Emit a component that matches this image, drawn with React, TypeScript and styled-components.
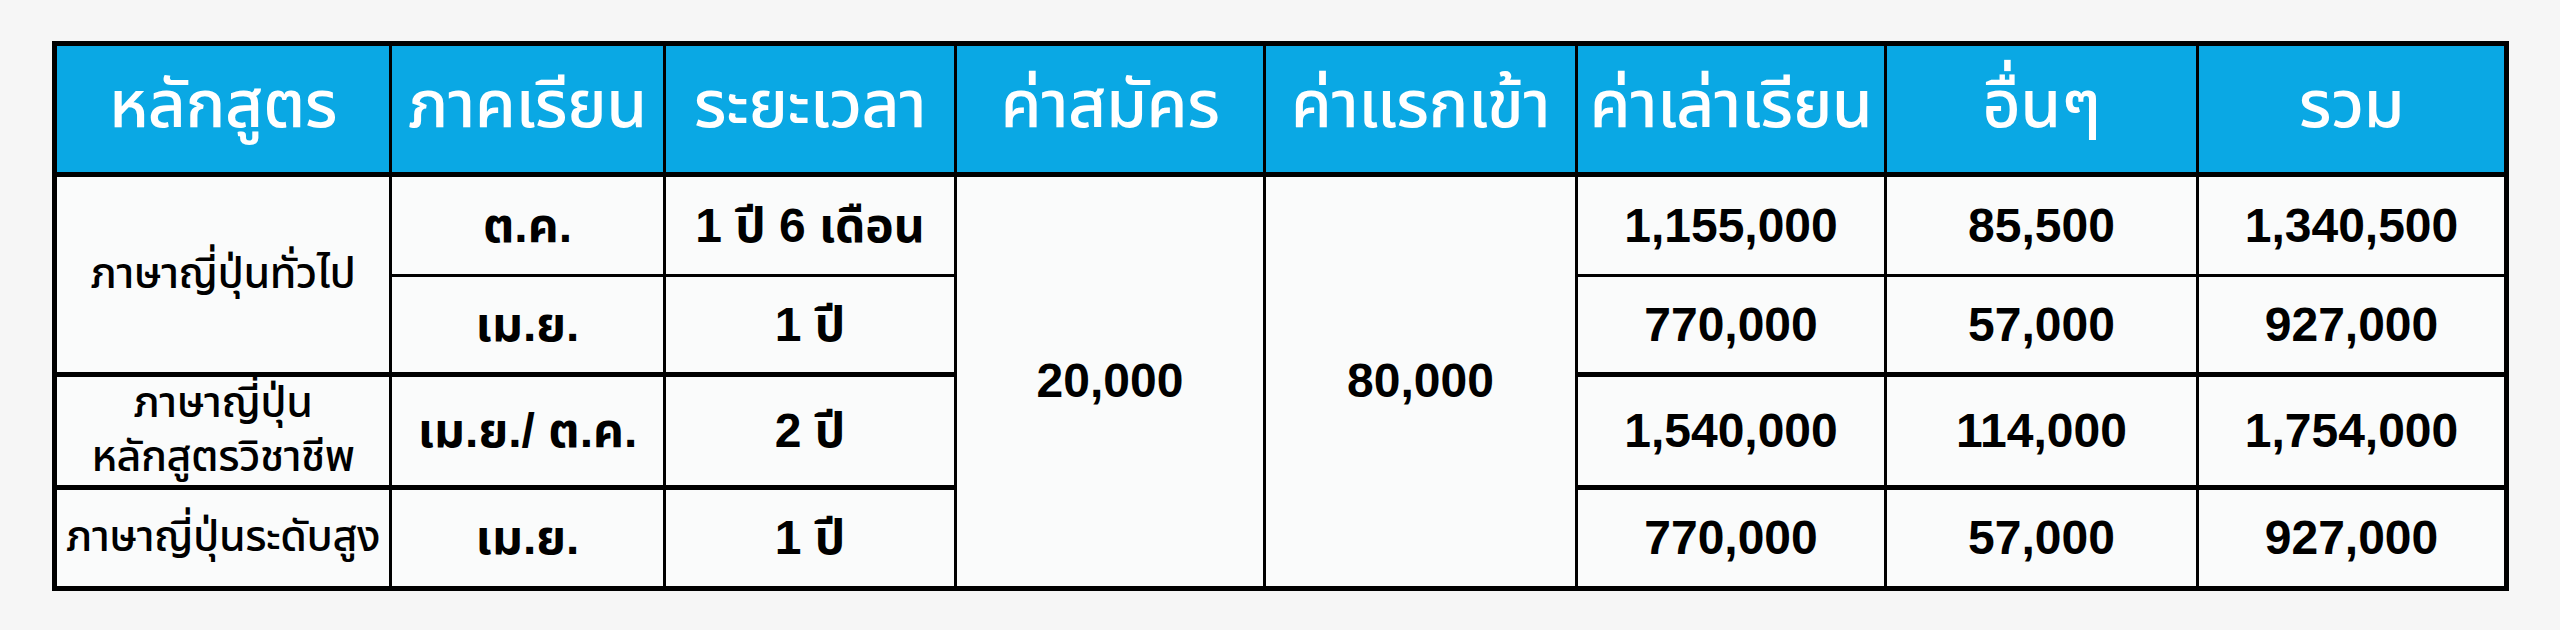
import * as React from "react";
import styled, { createGlobalStyle } from "styled-components";

const GlobalStyle = createGlobalStyle`
  html, body {
    margin: 0;
    padding: 0;
    background: #f6f6f6;
  }
  body {
    font-family: "Noto Sans Thai", "Noto Sans", "Liberation Sans", sans-serif;
  }
`;

// column widths, measured between border centres
const COLUMNS = [336, 274, 291, 309, 312, 309, 312, 309];

const HEADINGS = [
  "หลักสูตร",
  "ภาคเรียน",
  "ระยะเวลา",
  "ค่าสมัคร",
  "ค่าแรกเข้า",
  "ค่าเล่าเรียน",
  "อื่นๆ",
  "รวม",
];

const Page = styled.div`
  padding: 41px 0 0 52px;
  width: 2560px;
  height: 630px;
  box-sizing: border-box;
`;

const Table = styled.table`
  border-collapse: collapse;
  table-layout: fixed;
  width: 2452px;
  border: 5px solid #000;
  background: #fafbfb;
`;

const Col = styled.col<{ $w: number }>`
  width: ${(p) => p.$w}px;
`;

const HeadRow = styled.tr`
  height: 131px;
  background: #0aa8e4;
`;

const HeadCell = styled.th`
  border: 3px solid #000;
  border-bottom-width: 5px;
  color: #fff;
  font-family: "Noto Sans Thai", "Noto Sans", sans-serif;
  font-size: 66px;
  font-weight: 500;
  letter-spacing: -0.5px;
  text-align: center;
  vertical-align: middle;
  padding: 0 0 4px;
  white-space: nowrap;
`;

const BodyRow = styled.tr<{ $h: number }>`
  height: ${(p) => p.$h}px;
`;

const Cell = styled.td<{ $thin?: boolean }>`
  border: 3px solid #000;
  border-top-width: 5px;
  border-top-color: #000;
  ${(p) => (p.$thin ? "border-top-width: 3px; border-top-color: #4a4a4a;" : "")}
  color: #000;
  font-family: "Liberation Sans", "Noto Sans Thai", sans-serif;
  font-size: 48px;
  font-weight: 700;
  line-height: 1;
  text-align: center;
  vertical-align: middle;
  padding: 0;
  white-space: nowrap;
`;

const Course = styled.span`
  display: block;
  font-family: "Noto Sans Thai", "Noto Sans", sans-serif;
  font-size: 43px;
  font-weight: 500;
  letter-spacing: -0.5px;
  line-height: 1.25;
`;

type Row = {
  term: string;
  length: string;
  tuition: string;
  other: string;
  total: string;
};

const App: React.FC = () => {
  const rows: Row[] = [
    { term: "ต.ค.", length: "1 ปี 6 เดือน", tuition: "1,155,000", other: "85,500", total: "1,340,500" },
    { term: "เม.ย.", length: "1 ปี", tuition: "770,000", other: "57,000", total: "927,000" },
    { term: "เม.ย./ ต.ค.", length: "2 ปี", tuition: "1,540,000", other: "114,000", total: "1,754,000" },
    { term: "เม.ย.", length: "1 ปี", tuition: "770,000", other: "57,000", total: "927,000" },
  ];
  const heights = [101, 99, 110, 101];

  const rest = (r: Row, thin: boolean) => (
    <>
      <Cell $thin={thin}>{r.tuition}</Cell>
      <Cell $thin={thin}>{r.other}</Cell>
      <Cell $thin={thin}>{r.total}</Cell>
    </>
  );

  return (
    <Page>
      <GlobalStyle />
      <Table>
        <colgroup>
          {COLUMNS.map((w, i) => (
            <Col key={i} $w={w} />
          ))}
        </colgroup>
        <thead>
          <HeadRow>
            {HEADINGS.map((h) => (
              <HeadCell key={h}>{h}</HeadCell>
            ))}
          </HeadRow>
        </thead>
        <tbody>
          <BodyRow $h={heights[0]}>
            <Cell rowSpan={2}>
              <Course>ภาษาญี่ปุ่นทั่วไป</Course>
            </Cell>
            <Cell>{rows[0].term}</Cell>
            <Cell>{rows[0].length}</Cell>
            <Cell rowSpan={4}>20,000</Cell>
            <Cell rowSpan={4}>80,000</Cell>
            {rest(rows[0], false)}
          </BodyRow>
          <BodyRow $h={heights[1]}>
            <Cell $thin>{rows[1].term}</Cell>
            <Cell $thin>{rows[1].length}</Cell>
            {rest(rows[1], true)}
          </BodyRow>
          <BodyRow $h={heights[2]}>
            <Cell>
              <Course>ภาษาญี่ปุ่น</Course>
              <Course>หลักสูตรวิชาชีพ</Course>
            </Cell>
            <Cell>{rows[2].term}</Cell>
            <Cell>{rows[2].length}</Cell>
            {rest(rows[2], false)}
          </BodyRow>
          <BodyRow $h={heights[3]}>
            <Cell>
              <Course>ภาษาญี่ปุ่นระดับสูง</Course>
            </Cell>
            <Cell>{rows[3].term}</Cell>
            <Cell>{rows[3].length}</Cell>
            {rest(rows[3], false)}
          </BodyRow>
        </tbody>
      </Table>
    </Page>
  );
};

export default App;
